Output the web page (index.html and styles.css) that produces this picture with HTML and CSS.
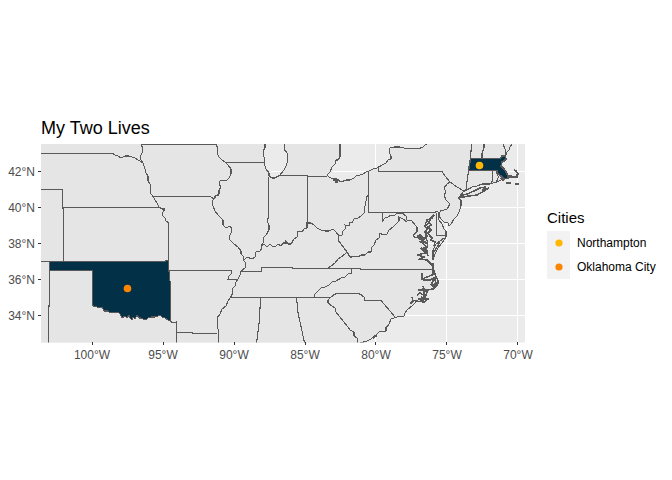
FILE: index.html
```html
<!DOCTYPE html>
<html lang="en">
<head>
<meta charset="utf-8">
<meta name="viewport" content="width=device-width, initial-scale=1">
<title>My Two Lives</title>
<link rel="stylesheet" href="styles.css">
</head>
<body>
<main class="chart">
  <section class="plot">
    <h1 class="title">My Two Lives</h1>
    <svg class="map" viewBox="0 140 535 226" role="img" aria-label="Map of the central and eastern United States">
      <defs>
        <clipPath id="panel"><rect x="41" y="144" width="484" height="198.5"/></clipPath>
      </defs>
      <g clip-path="url(#panel)" shape-rendering="crispEdges">
        <rect class="sea" x="41" y="144" width="484" height="199"/>
        <path class="grid" d="M41 171.5H525M41 207.5H525M41 243.5H525M41 279.5H525M41 315.5H525M92.5 144V343M163.5 144V343M234.5 144V343M305.5 144V343M375.5 144V343M446.5 144V343M517.5 144V343"/>

        <!-- mainland with the Atlantic coast -->
        <path class="land" d="M39 142H514L512 145L510 147L509 150L507 152L506 155L505 157L506 159L505 161L503 162L504 164L503 166L507 170L509 174L510 177L507 178L504 179L502 178L499 181L497 182L495 182L490 184H482L477 186L472 187L467 190L463 192L460 196L458 198L461 200L461 206L459 212L457 216L454 219L451 224L449 226L448 223L444 222L441 219L439 216L440 213L438 213L439 220L442 224L444 229L446 231V237L442 243L438 248L435 254L433 260V250L436 244L433 241L429 240L431 237L428 236L429 230L427 226L429 221L433 219L434 214L431 218L427 220L425 225L427 231L425 237L428 242L427 247L425 250L428 254L425 256L428 260L430 263L433 266L433 271L435 275L437 279L438 283L436 287L433 290L428 292L427 298L424 302L417 301L412 306L407 310L405 313L404 316L397 317L394 318L391 319L389 324L386 328L379 332L376 335L371 339L367 341L364 345H39Z"/>
        <path class="water" d="M265 142V148L263 151L264 157L265 160L264 163L266 169L269 173L269 176L272 178H275L280 175L284 170L286 166L288 160L287 153L284 149L285 142Z"/>
        <path class="water" d="M340 142V149L340 157L338 160L336 160L335 164L332 167L330 172L327 175L329 177L333 179L337 179L341 182L346 180L350 180L354 178L356 176L360 175L363 174L366 172L369 171L373 169L377 168L382 165L386 163L388 160L391 159V156L389 152L390 148L394 147L400 147L404 148L408 149L412 148L418 149L423 147L425 145L429 142Z"/>
        <path class="grid" d="M375.5 144V168M271 171.5H282M333 171.5H366"/>

        <!-- states that hold a city -->
        <path class="home" d="M49.5 261.5H165.5V260.5H168.5V270L170 274L169.5 280L170.5 282V321L168 320L165 318L162 317L160 315L158 316L155 317L151 317L148 318L146 320L143 319L141 318L139 318L137 315L135 319L133 317L132 320L130 318L129 315L127 318L125 316L122 318L120 314L118 312L115 313L112 312L110 313L108 311L104 311L102 307L98 308L96 306L94 307L92.5 305V270.5H49.5Z"/>
        <path class="home bold" d="M470.5 158.5H500L502 156H505L506 159L504 161L502 162L501 166L504 169L506 172L508 176H510L508 178L504 179L501 176L498 174L497 170.5H468.5Z"/>

        <!-- plains -->
        <path class="border" d="M41 153.5H113L115 155L118 156L121 158L125 156H129L132 157L135 158L138 160L140 161L143 163L145 169L146 173L148 176V181L150 184L151 188L150 193L153 196L155 200L157 203L159 207L162 209H164L164 211L162 213L163 216L165 218L166 221L168.5 223V261M141 144L143 149L142 153L140 157L141 160L143 163M41 189.5H62.5V207L63.5 210V261M63 207.5H159M41 261.5H50M49.5 270V306H48.5V343M141 144.5H216M152 196.5H210L214 199L216 196L219 195M170 320L172 323L176.5 322V343M176.5 332.5H192L193 333.5H217M168.5 270.5H231L232 273L229 276L228 279.5H238"/>

        <!-- Mississippi and its neighbours -->
        <path class="border" d="M216 144L218 149L217 153L219 157L222 160L225 162L228 165L231 169V174L229 178L227 180L220 181L219 184L221 187L219 190L219 194L215 196L214 199L212 201L213 206L215 211L219 216L223 220V225L226 228L230 226L232 229L231 233L229 237L230 240L234 244L238 247L241 251V254L244 257L243 260L246 263L245 268L241 271L240 275L238 279L236 282L235 286L232 289L233 293L230 298L228 301L226 306L222 309L220 314L217 318L218 323L217 327L219 331L218 336L219 343M225 162.5H264M268.5 177V217L267 221L269 225V230L266 235L263 238L264 242L261 245L262 248L260 251L256 252L255 257L252 259L247 257L244 260M280 175.5H307.5V224M307.5 176.5H327"/>

        <!-- Ohio valley and Appalachians -->
        <path class="border" d="M261 246L264 244L267 247L270 244L272 246L275 247L278 244L281 246L283 243L286 243L285 240L288 244L291 244L294 239L297 237L298 231L302 232L304 229L307 228V223L311 223L314 225L317 228L321 230L325 231H329L333 229L336 232L339 236L342 235L343 231L346 228L345 225L349 226L350 222L352 223L354 219L358 218L361 216L364 213L365 206L366 201L367 196H368.5M368.5 171V212.5M339 236L338 240L341 244L344 248L347 252L345 254L341 257L338 259L335 263L331 266L328 268M347 252L350 257H352L355 256L358 257L361 255L365 255L368 252L371 252L372 247L374 245L376 240L379 238L380 233L383 235L387 234L389 230L393 227L396 224L399 221V217L403 219L407 222M382.5 212.5V221L385 218L388 217L391 215L394 216L397 213L402 213L406 216L407 220L412 221L415 225L417 227V232L413 235L415 238L418 237L420 240"/>
        <path class="border" d="M241 271.5H261.5V267.5H292L293 268.5H360L361 269.5H433M351.5 269V273L348 274L345 277L341 278L336 281L332 282L329 285L325 287L321 288L317 292L315 294L314.5 297M231 297.5H331M260.5 297L259.5 320L256.5 343M296.5 297L298 313L302 331L304.5 343M331 297L335 294L341 293.5H352L360 294L364 297L365 300.5H381L390 311L395 317M331 297L328 300L328 303L332 306L335 308L336 312L340 317L344 322L348 327L350 330L354 332L354 336L357 338L358 343"/>

        <!-- northeast -->
        <path class="border" d="M378.5 167V171.5H442L445 176L450 182L447 184L444 188L446 192L444 195L446 200L450 204L447 209L444 210L440 211M368.5 212.5H434L438 211M450 182L457 187L464 191L467 189L466 185L467.5 180L468.5 170M436.5 213V235.5H446M470.5 159L471.5 144M482 158V153L484 148V144M492.5 170V181L490 184M503 144L505 149L506 155M469 170.5H497V174L499 178"/>
        <path class="coast" d="M265 144V148L263 151L264 157L265 160L264 163L266 169L269 173V176L272 178H275L280 175L284 170L286 166L288 160L287 153L284 149L285 144M340 144V149L340 157L338 160L336 160L335 164L332 167L330 172L327 175L329 177L333 179H337L341 182L346 180H350L354 178L356 176L360 175L363 174L366 172L369 171L373 169L377 168L382 165L386 163L388 160L391 159V156L389 152L390 148L394 147H400L404 148L408 149L412 148L418 149L423 147L425 145L429 143M333 180H337V182H335"/>
        <path class="coast" d="M512 144L510 147L509 150L507 152L506 155L505 157M503 179L499 181L497 182L498 178L496 182L490 184H482L477 186L472 187L467 190L463 192L460 196L458 198L461 200V206L459 212L457 216L454 219L451 224L449 226L448 223L444 222L441 219L439 216L440 212L438 213L439 220L442 224L444 229L446 231V237L442 243L438 248L435 254L433 260V250L436 244L440 241L444 238M440 242L434 252L433 258M434 214L431 218L427 220L425 225L427 231L425 237L428 242L427 247L425 250"/>

        <!-- Cape Cod, Long Island and the islands -->
        <path class="coast bold" d="M509 177H517V175L518 174L516 171L514 170M501 178L503 181"/>
        <path class="isle bold" d="M459 198L463 195L467 194L474 191L480 188L485 187L483 190L489 188L484 191L477 195L469 196L463 197Z"/>
        <path class="dense" d="M506 183H511M515 184H519"/>

        <!-- Chesapeake Bay inlets and the Carolina sounds -->
        <path class="inlet bold" d="M434 215L431 218L429 222L431 225L428 227L431 230L428 233L430 236L432 238L431 240L435 242L434 246M433 218L427 220L429 223L425 226L427 229L425 232L427 236L424 239L420 235L418 236L422 240L427 243L421 242L427 247L424 248L428 252L421 248L425 253L418 255L424 257L420 259L427 260L430 263L433 264M425 249L428 256M430 263L433 267M422 273V279L427 277L432 275L434 271L436 277L430 280L423 280M436 276L438 281L437 285L433 289L427 290H418L424 289L423 286M432 282L435 279L436 283L433 286L431 284M417 295L420 293L425 296L423 289L427 292L425 298L421 297L428 299L424 302L416 301L412 300M418 299L424 301M412 297L413 301L410 304"/>
        <path class="dense" d="M433 263V275M424 289V300M431 283H433M419 299H427"/>
        <path class="thin" d="M424 302L417 301L412 306L407 310L405 313L404 316L397 317L394 318L391 319L389 324L386 328L386 331L379 332L376 335L371 339L367 341L360 343M438 280L438 284"/>
        <path class="dense" d="M386 327V330M373 338L377 335"/>
      </g>

      <g class="cities">
        <circle class="northampton" cx="479.5" cy="165.5" r="3.8"/>
        <circle class="oklahoma" cx="127.5" cy="288.5" r="3.8"/>
      </g>

      <path class="tick" shape-rendering="crispEdges" d="M38 171.5H41M38 207.5H41M38 243.5H41M38 279.5H41M38 315.5H41M92.5 342V345M163.5 342V345M234.5 342V345M305.5 342V345M375.5 342V345M446.5 342V345M517.5 342V345"/>
      <g class="labels lat">
        <text x="35" y="176">42°N</text>
        <text x="35" y="212">40°N</text>
        <text x="35" y="248">38°N</text>
        <text x="35" y="284">36°N</text>
        <text x="35" y="320">34°N</text>
      </g>
      <g class="labels lon">
        <text x="92" y="359">100°W</text>
        <text x="163" y="359">95°W</text>
        <text x="234" y="359">90°W</text>
        <text x="305" y="359">85°W</text>
        <text x="376" y="359">80°W</text>
        <text x="447" y="359">75°W</text>
        <text x="518" y="359">70°W</text>
      </g>
    </svg>
  </section>
  <aside class="legend">
    <h2 class="legend-title">Cities</h2>
    <ul class="keys">
      <li class="key"><span class="swatch"><svg class="dot northampton" viewBox="0 0 8 8" aria-hidden="true"><circle cx="4" cy="4" r="3.6"/></svg></span>Northampton</li>
      <li class="key"><span class="swatch"><svg class="dot oklahoma" viewBox="0 0 8 8" aria-hidden="true"><circle cx="4" cy="4" r="3.6"/></svg></span>Oklahoma City</li>
    </ul>
  </aside>
</main>
</body>
</html>
```

FILE: styles.css
```css
* {
  box-sizing: border-box;
}

body {
  margin: 0;
  background: #fff;
  color: #000;
  font-family: "Liberation Sans", Arial, sans-serif;
}

.chart {
  display: grid;
  grid-template-columns: minmax(0, 1fr) 125px;
  column-gap: 12px;
  align-content: center;
  align-items: center;
  min-height: 100vh;
  padding-top: 2px;
}

.title {
  margin: 0;
  padding-left: 41px;
  font-size: 18px;
  font-weight: 400;
  line-height: 24px;
}

.map {
  display: block;
  width: 100%;
  height: auto;
  overflow: visible;
}

.sea,
.water {
  fill: #ebebeb;
}

.land {
  fill: #e5e5e5;
}

.grid {
  fill: none;
  stroke: #fff;
  stroke-width: 1;
}

.border,
.coast,
.inlet,
.thin,
.dense {
  fill: none;
  stroke: #595959;
  stroke-width: 1.1;
}

.home {
  fill: #023047;
  stroke: #595959;
  stroke-width: 1.1;
}

.isle {
  fill: #e5e5e5;
  stroke: #595959;
}

.bold {
  stroke-width: 1.5;
}

.dense {
  stroke-width: 2;
}

.northampton {
  fill: #ffb703;
}

.oklahoma {
  fill: #fb8500;
}

.tick {
  stroke: #333;
  stroke-width: 1;
}

.labels {
  fill: #4d4d4d;
  font-size: 12px;
}

.lat {
  text-anchor: end;
}

.lon {
  text-anchor: middle;
}

.legend {
  padding-top: 2px;
}

.legend-title {
  margin: 0;
  font-size: 15px;
  font-weight: 400;
  line-height: 26px;
}

.keys {
  margin: 0;
  padding: 0;
  list-style: none;
}

.key {
  display: flex;
  align-items: center;
  gap: 7px;
  font-size: 12px;
  line-height: 24px;
  white-space: nowrap;
}

.swatch {
  display: flex;
  align-items: center;
  justify-content: center;
  width: 23px;
  height: 24px;
  background: #f2f2f2;
}

.dot {
  width: 8px;
  height: 8px;
}
```
